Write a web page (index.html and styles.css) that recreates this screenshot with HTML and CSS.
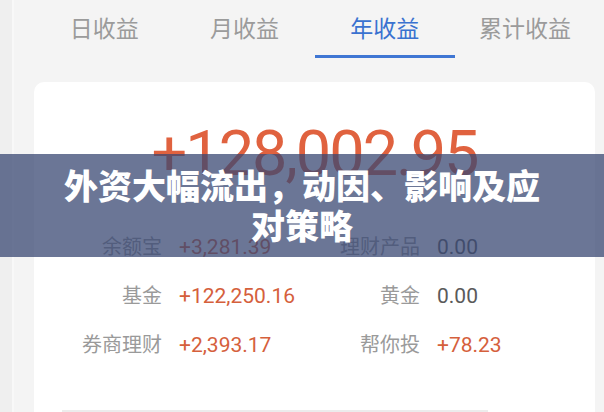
FILE: index.html
```html
<!doctype html>
<html>
<head>
<meta charset="utf-8">
<title>收益</title>
<link rel="stylesheet" href="styles.css">
</head>
<body>
	<div class="page">
		<div class="tabs">
			<div class="tab">日收益</div>
			<div class="tab">月收益</div>
			<div class="tab on">年收益</div>
			<div class="tab">累计收益</div>
		</div>
		<div class="card">
			<div class="total">+128,002.95</div>
			<div class="rows">
				<div class="label">余额宝</div>
				<div class="val up">+3,281.39</div>
				<div class="label">理财产品</div>
				<div class="val">0.00</div>

				<div class="label">基金</div>
				<div class="val up">+122,250.16</div>
				<div class="label">黄金</div>
				<div class="val">0.00</div>

				<div class="label">券商理财</div>
				<div class="val up">+2,393.17</div>
				<div class="label">帮你投</div>
				<div class="val up">+78.23</div>
			</div>
			<div class="line"></div>
		</div>
	</div>
	<div class="banner">外资大幅流出，动因、影响及应<br>对策略</div>
</body>
</html>
```

FILE: styles.css
```css
body{
	margin: 0;
	height: 412px;
	overflow: hidden;
	font-family: Roboto, "Noto Sans CJK SC", sans-serif;
	background: linear-gradient(to right, #efefef 12px, #f8f8f8 12px, #f8f8f8 14px, #f4f4f4 14px);
}
.page{
	padding: 0 9px 0 34px;
}
.tabs{
	display: grid;
	grid-template-columns: repeat(4, 1fr);
	height: 58px;
}
.tab{
	position: relative;
	padding-top: 17px;
	text-align: center;
	font-size: 23px;
	line-height: 26px;
	color: #9b9b9b;
}
.tab.on{
	color: #3a72d0;
}
.tab.on::after{
	content: "";
	position: absolute;
	left: 0;
	right: 0;
	bottom: 0;
	height: 3px;
	background: #3f76d3;
}
.card{
	margin-top: 24px;
	background: #fff;
	border-radius: 10px;
	height: 400px;
	padding-top: 40px;
	box-sizing: border-box;
}
.total{
	text-align: center;
	font-size: 63px;
	line-height: 63px;
	letter-spacing: -2px;
	color: #e0623f;
}
.rows{
	display: grid;
	grid-template-columns: 128px 138px 120px 1fr;
	margin-top: 38px;
	line-height: 49px;
}
.label{
	text-align: right;
	font-size: 20px;
	color: #9a9a9a;
}
.val{
	padding-left: 17px;
	font-size: 21px;
	color: #5a5a5a;
}
.val.up{
	color: #d5603c;
}
.line{
	margin: 40px 107px 0 28px;
	border-top: 2px solid #ececec;
}
.banner{
	position: absolute;
	top: 154px;
	left: 0;
	right: 0;
	height: 103px;
	box-sizing: border-box;
	padding-top: 11px;
	text-align: center;
	font-family: "Noto Sans CJK SC", sans-serif;
	font-weight: 900;
	font-size: 34px;
	line-height: 40px;
	color: #fff;
	background: rgba(58, 72, 115, 0.75);
}
```
